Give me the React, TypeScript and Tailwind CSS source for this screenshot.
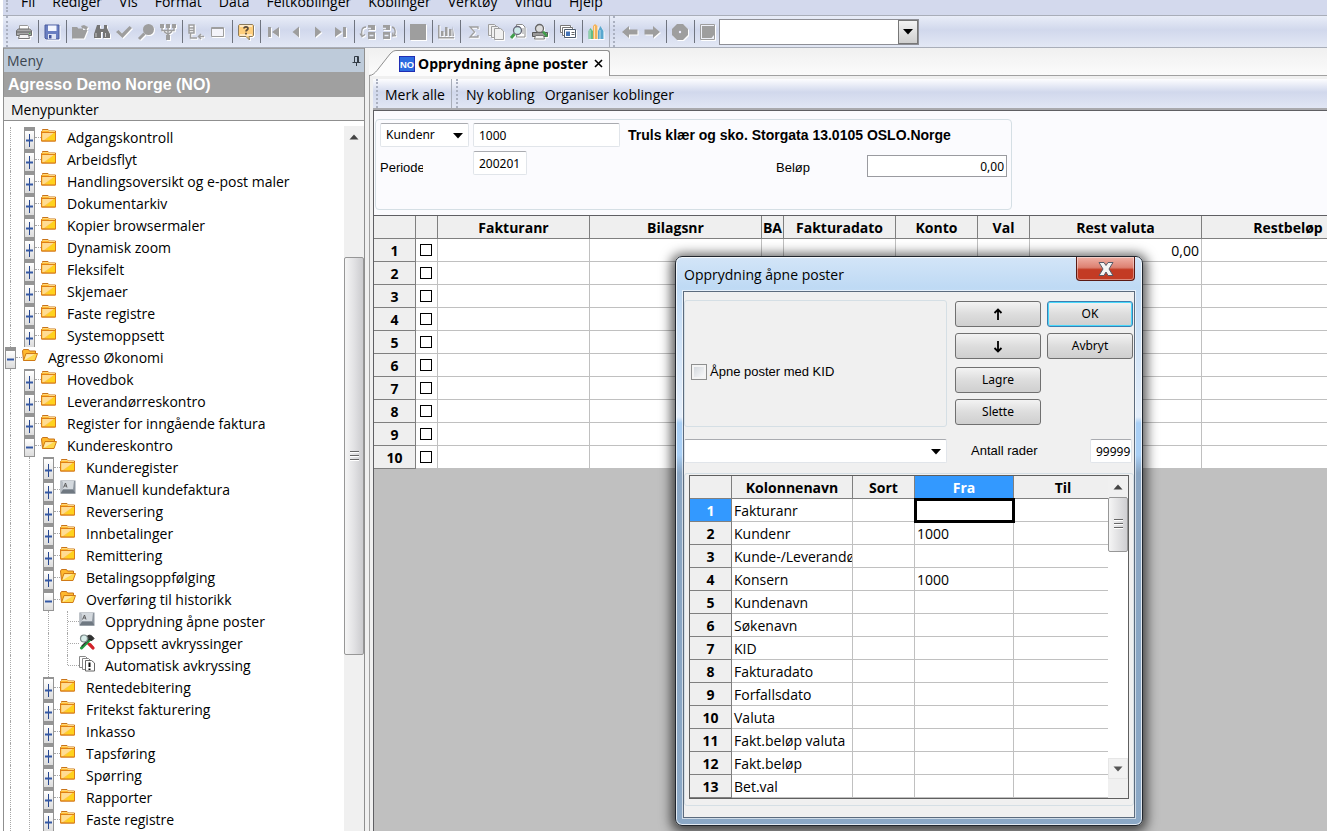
import React from 'react';

type IconKind = 'folder' | 'open' | 'form' | 'tools' | 'report';
type Row = { label: string; level: number; icon: IconKind; exp?: '+' | '-'; first?: boolean; last?: boolean };

const rows: Row[] = [
  { label: 'Adgangskontroll', level: 2, icon: 'folder', exp: '+' },
  { label: 'Arbeidsflyt', level: 2, icon: 'folder', exp: '+' },
  { label: 'Handlingsoversikt og e-post maler', level: 2, icon: 'folder', exp: '+' },
  { label: 'Dokumentarkiv', level: 2, icon: 'folder', exp: '+' },
  { label: 'Kopier browsermaler', level: 2, icon: 'folder', exp: '+' },
  { label: 'Dynamisk zoom', level: 2, icon: 'folder', exp: '+' },
  { label: 'Fleksifelt', level: 2, icon: 'folder', exp: '+' },
  { label: 'Skjemaer', level: 2, icon: 'folder', exp: '+' },
  { label: 'Faste registre', level: 2, icon: 'folder', exp: '+' },
  { label: 'Systemoppsett', level: 2, icon: 'folder', exp: '+' },
  { label: 'Agresso Økonomi', level: 1, icon: 'open', exp: '-', last: true },
  { label: 'Hovedbok', level: 2, icon: 'folder', exp: '+', first: true },
  { label: 'Leverandørreskontro', level: 2, icon: 'folder', exp: '+' },
  { label: 'Register for inngående faktura', level: 2, icon: 'folder', exp: '+' },
  { label: 'Kundereskontro', level: 2, icon: 'open', exp: '-', last: true },
  { label: 'Kunderegister', level: 3, icon: 'folder', exp: '+', first: true },
  { label: 'Manuell kundefaktura', level: 3, icon: 'form', exp: '+' },
  { label: 'Reversering', level: 3, icon: 'folder', exp: '+' },
  { label: 'Innbetalinger', level: 3, icon: 'folder', exp: '+' },
  { label: 'Remittering', level: 3, icon: 'folder', exp: '+' },
  { label: 'Betalingsoppfølging', level: 3, icon: 'open', exp: '+' },
  { label: 'Overføring til historikk', level: 3, icon: 'open', exp: '-', last: true },
  { label: 'Opprydning åpne poster', level: 4, icon: 'form' },
  { label: 'Oppsett avkryssinger', level: 4, icon: 'tools' },
  { label: 'Automatisk avkryssing', level: 4, icon: 'report', last: true },
  { label: 'Rentedebitering', level: 3, icon: 'folder', exp: '+', first: true },
  { label: 'Fritekst fakturering', level: 3, icon: 'folder', exp: '+' },
  { label: 'Inkasso', level: 3, icon: 'folder', exp: '+' },
  { label: 'Tapsføring', level: 3, icon: 'folder', exp: '+' },
  { label: 'Spørring', level: 3, icon: 'folder', exp: '+' },
  { label: 'Rapporter', level: 3, icon: 'folder', exp: '+' },
  { label: 'Faste registre', level: 3, icon: 'folder', exp: '+' },
];

function TreeIcon({ kind }: { kind: IconKind }) {
  return (
    <svg width="16" height="16" viewBox="0 0 16 16" className="mb-1 shrink-0" aria-hidden="true">
      {kind === 'folder' && (
        <g>
          <path d="M.5 13V3.500l1-1V1.500h5.500l1 1.500h6.500V13z" fill="#ffb92e" stroke="#c8741a" />
          <path d="M1.500 2.500h6l.5 1h6" stroke="#ffd77c" fill="none" />
          <path d="M1 4h13.500v8.500H1z" fill="#ffc93c" />
          <path d="M1.500 4.500h12L3 12H1.500z" fill="#ffdc94" />
          <path d="M14 4v8.500H5L13 5z" fill="#ffd21e" />
          <path d="M.5 4.500h14V13H.5z" fill="none" stroke="#dd7f18" />
        </g>
      )}
      {kind === 'open' && (
        <g strokeLinejoin="round">
          <path d="M1.500 12.500l-1-9.500 1-1.500h5l1 1.500h6v3" fill="#ffb92e" stroke="#c8741a" />
          <path d="M1.500 12.500l2.500-7h11.500l-2.500 7z" fill="#ffd84a" stroke="#d07a16" />
          <path d="M4.600 6.300h8L3.500 11.500h-.9z" fill="#ffe7ae" />
        </g>
      )}
      {kind === 'form' && (
        <g>
          <path d="M.5.500h15v13H.5z" fill="#8d959e" />
          <path d="M2 1h12l-1 8.500H3z" fill="#d4d9de" />
          <path d="M.5 13.500L3 9.500h10l2.500 4z" fill="#6f7881" />
          <path d="M.5.500L3 2v7.500L.5 13z" fill="#b7bdc4" />
          <path d="M3.500 7.500L5.500 3l1.500 4.500M4.300 6h2.200" stroke="#555" fill="none" strokeWidth=".9" />
        </g>
      )}
      {kind === 'tools' && (
        <g fill="none" strokeLinecap="round">
          <path d="M4 4.500L14 14" stroke="#d2232a" strokeWidth="2.600" />
          <path d="M11.500 5L2.500 14" stroke="#1f9d40" strokeWidth="3" />
          <path d="M9 6L3 12" stroke="#333" strokeWidth="1.200" />
          <circle cx="5" cy="4.500" r="3.500" fill="#d7ece9" stroke="#7b8a8a" strokeWidth="1.200" />
          <path d="M8.500 2c2-1.600 4-1 6.500 2.500L13 6.500 9.500 5" fill="#333" stroke="#222" />
          <path d="M11 10.500l3 3.500" stroke="#d2232a" strokeWidth="3" />
        </g>
      )}
      {kind === 'report' && (
        <g fill="#fff" stroke="#888">
          <path d="M.5.500h6l2 2v9h-8z" />
          <path d="M3.500 2.500h6l2 2v9h-8z" />
          <path d="M6.500 4.500h6l3 2.500v8h-9z" stroke="#666" />
          <path d="M10.500 6.500v4.500M10.500 12.500v1.500" stroke="#111" strokeWidth="2" />
        </g>
      )}
    </svg>
  );
}

function TreeRow({ row }: { row: Row }) {
  return (
    <li className="flex h-[22px] shrink-0 items-stretch">
      {Array.from({ length: row.level - 1 }, (_, i) => (
        <span key={i} className="flex w-[19px] shrink-0 pl-1.5">
          <span className="border-l border-dotted border-[#a8a8a8]" />
        </span>
      ))}
      {row.exp ? (
        <span className="flex w-[18px] shrink-0 pl-px">
          <button
            type="button"
            aria-label={(row.exp === '+' ? 'Utvid ' : 'Skjul ') + row.label}
            className={
              'flex w-[11px] items-center justify-center border-x border-[#949494] bg-linear-to-b from-white to-[#dcdcdc] ' +
              (row.first ? 'border-t-2 pt-0.5 ' : 'border-t-4 ') +
              (row.last ? 'border-b' : '')
            }
          >
            <svg width="7" height="13" viewBox="0 0 7 13" className="shrink-0" aria-hidden="true">
              {row.exp === '+' && <path d="M3.500 0v13" stroke="#26468f" />}
              <path d="M0 6.500h7" stroke="#3458a4" strokeWidth="2" />
            </svg>
          </button>
          <span className="mt-2.5 h-0 grow border-t border-dotted border-[#a8a8a8]" />
        </span>
      ) : (
        <span className="flex w-[18px] shrink-0 pl-1.5">
          <span className={'border-l border-dotted border-[#a8a8a8] ' + (row.last ? 'h-2.5' : '')} />
          <span className="mt-2.5 h-0 grow border-t border-dotted border-[#a8a8a8]" />
        </span>
      )}
      <span className="flex w-[26px] shrink-0 items-center">
        <TreeIcon kind={row.icon} />
      </span>
      <a href="#" className="whitespace-nowrap text-[14px] leading-[22px]">{row.label}</a>
    </li>
  );
}

const G = '#9e9e9e';

const tools: Record<string, React.ReactNode> = {
  Skriv: (
    <g>
      <path d="M4.500 7V2.500h8l1 1V7" fill="#fff" stroke="#999" />
      <path d="M1.500 7.500l2-1.500h11l2 1.500v5h-15z" fill="#a9a9a9" stroke="#6c6c6c" />
      <path d="M2 9h14" stroke="#5c5c5c" />
      <path d="M4.500 11.500h9l1 4h-11z" fill="#f3f3f3" stroke="#777" />
      <path d="M14 10.500h1.500" stroke="#4fae4f" />
    </g>
  ),
  Lagre: (
    <g>
      <path d="M2 2h14v14H3l-1-1z" fill="#6a7fc2" stroke="#4b5c9e" />
      <path d="M5 2.500h8.500v5.500H5z" fill="#f3f6ff" />
      <path d="M5 11h8v5H5z" fill="#dfe5f5" />
      <path d="M6 12h2.500v3.500H6z" fill="#42549a" />
    </g>
  ),
  Apne: <path d="M1 4h5l1.500 1.500H12V7h4.500L13 15.500H1zM10 3l3-1 4 2-2 4-1-2-3-1z" fill={G} />,
  Sok: (
    <g fill="#757575">
      <path d="M4 2h3v3l1 2v8H1v-4zM11 2h3v3l3 6v4h-7V7l1-2z" />
      <path d="M7 6h4v3H7z" />
      <path d="M3 10v4M12.500 10v4" stroke="#ccc" />
    </g>
  ),
  Bekreft: <path d="M1 9l2.500-2L7 10.500 14.500 3 17 5 7.500 15z" fill={G} />,
  Zoom: (
    <g>
      <circle cx="11.500" cy="6.500" r="5.500" fill={G} />
      <path d="M7.500 10.500L2 16" stroke={G} strokeWidth="3" />
    </g>
  ),
  Filter: (
    <g fill={G}>
      <path d="M1 1h4v4H1zM7 1h4v4H7zM13 1h4v4h-4zM7 12h4v5H7z" />
      <path d="M3 5v2.500h12V5M9 5v7M5 8.500l4 3 4-3" fill="none" stroke={G} strokeWidth="1.500" />
    </g>
  ),
  Struktur: (
    <g fill="none" stroke={G} strokeWidth="1.500">
      <path d="M2 2h5v8H2zM2 5h5M2 7.500h5M3.500 10v5H10M12 13.500h5M14 11l-2.500 2.500L14 16" />
    </g>
  ),
  Vindu: (
    <g>
      <path d="M2.500 4.500h12v9h-12z" fill="#f4f4fa" stroke={G} />
      <path d="M3 5.500h11" stroke={G} />
    </g>
  ),
  Hjelp: (
    <g>
      <path d="M2.500 1.500h13l1 1v10l-1 1H12l.5 3.500-3.500-3.500H2.500l-1-1v-10z" fill="#ffcf7d" stroke="#8a7a5c" />
      <path d="M3 3h12M3 12h12" stroke="#ffe9c4" strokeWidth="2" />
      <path d="M7 5.500c0-2.200 4-2.200 4 0 0 1.500-2 1.500-2 3M9 9.800v1.700" fill="none" stroke="#5a4a3a" strokeWidth="1.700" />
    </g>
  ),
  Forste: <path d="M3 4h3v10H3zM14 4v10L7 9z" fill={G} />,
  Forrige: <path d="M12 3.500v11L5.500 9z" fill={G} />,
  Neste: <path d="M6 3.500v11L12.500 9z" fill={G} />,
  Siste: <path d="M12 4h3v10h-3zM4 4v10l7-5z" fill={G} />,
  Inn: (
    <g fill={G}>
      <path d="M9 2h7v5H9zM9 9h7v7H9z" />
      <path d="M7 4c-4 0-5 3-4 9M1 10.500L3 13.500l3-2" fill="none" stroke={G} strokeWidth="1.300" />
      <path d="M10.500 12.500h4M9 5.500h3" stroke="#e8ecf7" strokeWidth="1.500" />
    </g>
  ),
  Ut: (
    <g fill={G}>
      <path d="M2 2h7v5H2zM2 9h7v7H2z" />
      <path d="M11 4c4 1 4 7 1 9M15 12.500l-3.500.5.5-3.500" fill="none" stroke={G} strokeWidth="1.300" />
      <path d="M3.500 12.500h4M2 5.500h3" stroke="#e8ecf7" strokeWidth="1.500" />
    </g>
  ),
  Stopp: <path d="M1 1h16v16H1z" fill={G} />,
  Graf: <path d="M1 2h1.500v12H17v1.500H1zM4 8h2.500v5H4zM8 4h2.500v9H8zM12 6h2.500v7H12zM15.500 3v10H17" fill={G} />,
  Sum: <path d="M13 6V4H5l4.500 5L5 14h8v-2" fill="none" stroke={G} strokeWidth="1.300" />,
  Kopier: (
    <g fill="#f1f1f1" stroke={G}>
      <path d="M1.500 1.500h6l2 2v9h-8z" />
      <path d="M4.500 3.500h6l2 2v9h-8z" />
      <path d="M7.500 5.500h6l3 2.500v8.500h-9z" />
    </g>
  ),
  Forhandsvis: (
    <g>
      <path d="M7.500 1.500h6l2.500 2.500v10H7.500z" fill="#fff" stroke="#8a8a8a" />
      <path d="M13 6h2M13 8h2M13 10h2" stroke="#999" />
      <path d="M5.500 11L2 15" stroke="#3f9d4b" strokeWidth="3" />
      <circle cx="8.500" cy="7.500" r="4" fill="#cfe9ea" stroke="#667" strokeWidth="1.300" />
    </g>
  ),
  Utskrift: (
    <g>
      <path d="M1.500 9.500h15v4h-15z" fill="#9a9a9a" stroke="#555" />
      <path d="M4.500 12.500h8l1 3.500h-10z" fill="#f3f3f3" stroke="#777" />
      <path d="M12 8.500l4 5" stroke="#3f9d4b" strokeWidth="2.500" />
      <circle cx="8.500" cy="5.500" r="4" fill="#dcdcdc" stroke="#666" strokeWidth="1.300" />
    </g>
  ),
  Kort: (
    <g fill="#fff" stroke="#777">
      <path d="M1.500 2.500h10v7h-10z" />
      <path d="M3.500 4.500h10v8h-10z" />
      <path d="M5.500 6.500h11v8h-11z" stroke="#4c5a6c" />
      <path d="M7 8.500h4v4.500H7z" fill="#4474b8" stroke="none" />
      <path d="M12.500 9.500h3M12.500 11.500h3" stroke="#666" />
    </g>
  ),
  Boker: (
    <g>
      <path d="M1.500 16V8l2-3 2.500 3v8z" fill="#63bd88" />
      <path d="M6 16V3l2-2 2.500 2v13z" fill="#f3b35a" />
      <path d="M11 16V8l2.500-5L16.500 8v8z" fill="#58a7cf" />
      <path d="M3 7v9M7.500 3v13M13 7v9" stroke="#fff" strokeOpacity=".6" />
    </g>
  ),
  Tilbake: <path d="M1 9l7-6v3.500h8.500v5H8V15z" fill={G} />,
  Frem: <path d="M17 9l-7-6v3.500H1.500v5H10V15z" fill={G} />,
  Avbryt: (
    <g>
      <path d="M6 1h6l5 5v6l-5 5H6l-5-5V6z" fill={G} />
      <circle cx="9" cy="9" r="1.200" fill="#eef" />
    </g>
  ),
  Side: (
    <g>
      <path d="M1.500 1.500h14v15h-14z" fill="#eef0f8" stroke={G} />
      <path d="M3 3h12v9l-2.500 3H3z" fill={G} />
    </g>
  ),
};

const groups = [
  ['Skriv'], ['Lagre'], ['Apne', 'Sok', 'Bekreft', 'Zoom', 'Filter'], ['Struktur', 'Vindu'], ['Hjelp'],
  ['Forste', 'Forrige', 'Neste', 'Siste'], ['Inn', 'Ut'], ['Stopp'], ['Graf'],
  ['Sum', 'Kopier', 'Forhandsvis', 'Utskrift'], ['Kort'], ['Boker'],
];
const navGroups = [['Tilbake', 'Frem'], ['Avbryt'], ['Side']];

function ToolGroups({ items }: { items: string[][] }) {
  return (
    <>
      {items.map((grp, i) => (
        <div key={i} className="flex items-center">
          {i > 0 && <span className="flex w-1.5 justify-center"><span className="h-[23px] w-px bg-[#6f747f]" /></span>}
          {grp.map((n) => (
            <button key={n} type="button" aria-label={n} className="flex h-[22px] w-[22px] items-center justify-center">
              <svg width="18" height="18" viewBox="0 0 18 18" className="drop-shadow-[1px_1px_0_#ffffff]" aria-hidden="true">{tools[n]}</svg>
            </button>
          ))}
        </div>
      ))}
    </>
  );
}

function Grip() {
  return <span className="w-0 shrink-0 self-stretch border-l-2 border-dotted border-[#aab0c0]" />;
}

function Arrow({ up }: { up?: boolean }) {
  return (
    <svg width="10" height="6" viewBox="0 0 10 6" aria-hidden="true">
      <path d={up ? 'M5 .5L9.500 5.500H.5z' : 'M0 0h10L5 5.500z'} fill={up ? '#444' : '#000'} />
    </svg>
  );
}

function Thumb() {
  return (
    <svg width="9" height="11" viewBox="0 0 9 11" aria-hidden="true">
      <path d="M0 .5h9M0 4.500h9M0 8.500h9" stroke="#666" />
      <path d="M0 1.500h9M0 5.500h9M0 9.500h9" stroke="#fff" />
    </svg>
  );
}

const menu = ['Fil', 'Rediger', 'Vis', 'Format', 'Data', 'Feltkoblinger', 'Koblinger', 'Verktøy', 'Vindu', 'Hjelp'];
const mainCols = ['Fakturanr', 'Bilagsnr', 'BA', 'Fakturadato', 'Konto', 'Val', 'Rest valuta', 'Restbeløp'];
const fields = ['Fakturanr', 'Kundenr', 'Kunde-/Leverandør', 'Konsern', 'Kundenavn', 'Søkenavn', 'KID', 'Fakturadato', 'Forfallsdato', 'Valuta', 'Fakt.beløp valuta', 'Fakt.beløp', 'Bet.val'];

const field = 'border border-[#e1e5ea] border-t-[#a9abb0] rounded-[2px] bg-white font-["Noto_Sans",sans-serif] text-[12px] leading-[16px] outline-none';
const headBox = 'border-r border-b border-[#7f7f7f] p-0 pt-0.5 font-bold whitespace-nowrap overflow-hidden';
const head = headBox + ' bg-[#efefef]';
const headActive = headBox + ' bg-[#3399ff] text-white';
const cell = 'border-r border-b border-[#c0c0c0] bg-white p-0 whitespace-nowrap overflow-hidden';

const btn = 'flex h-[26px] w-[86px] items-center justify-center rounded-[3px] border bg-linear-to-b from-[#f3f3f3] from-0% via-[#dddddd] via-50% to-[#cfcfcf] font-["Noto_Sans",sans-serif] text-[12px]';

function Dialog() {
  return (
    <section
      role="dialog"
      aria-labelledby="dlg-title"
      className="absolute top-[256px] left-[675px] flex w-[468px] flex-col rounded-[7px] border border-[#20262e] bg-[linear-gradient(180deg,#d3e5f8_0px,#bfdaf4_30px,#c9dff6_60px,#e4eefa_160px,#a9cff5_166px,#a9cff5_198px,#8aa5c2_216px,#8ba8c6_100%)] px-[7px] pb-[7px] shadow-[inset_0_0_0_1px_rgba(255,255,255,0.75),0_2px_12px_4px_rgba(0,0,0,0.65)]"
    >
      <header className="flex h-[34px] items-start justify-between">
        <h2 id="dlg-title" className="pt-2 pl-px text-[14px] leading-[20px]">Opprydning åpne poster</h2>
        <button
          type="button"
          aria-label="Lukk"
          className="flex h-6 w-[59px] items-center justify-center rounded-b-[4px] border border-t-0 border-[#5b1a14] bg-linear-to-b from-[#efb1a6] via-[#dd8172] via-45% to-[#c33b24] to-55% shadow-[inset_0_0_0_1px_rgba(255,255,255,0.4)]"
        >
          <svg width="16" height="14" viewBox="0 0 16 14" aria-hidden="true">
            <path d="M1 .500h5L8 3.500 10 .500h5L11 7l4 6.500h-5L8 10l-2 3.500H1L5 7z" fill="#f4f4f4" stroke="#565a68" />
          </svg>
        </button>
      </header>
      <div className="flex flex-col border border-[#5c6b7d] bg-[#f0f0f0] pb-[11px] shadow-[0_0_0_1px_rgba(255,255,255,0.6)]">
        <div className="flex items-start pt-2">
          <div className="flex h-[127px] w-[263px] items-center rounded-[3px] border border-[#d5dfe5] pt-4 pl-1.5">
            <input id="kid" type="checkbox" className="h-4 w-4 appearance-none border border-[#8e8f8f] bg-linear-to-br from-[#cdd2d8] to-white shadow-[inset_0_0_0_2px_#f4f4f4]" />
            <label htmlFor="kid" className="pl-[3px] font-['Liberation_Sans',sans-serif] text-[13px]">Åpne poster med KID</label>
          </div>
          <div className="flex flex-col gap-1.5 pt-px pl-2">
            <button type="button" aria-label="Opp" className={btn + ' border-[#707070]'}>
              <svg width="10" height="13" viewBox="0 0 10 13" aria-hidden="true"><path d="M5 12V2M1.500 5L5 1.500 8.500 5" fill="none" stroke="#000" strokeWidth="1.800" /></svg>
            </button>
            <button type="button" aria-label="Ned" className={btn + ' border-[#707070]'}>
              <svg width="10" height="13" viewBox="0 0 10 13" aria-hidden="true"><path d="M5 1v10M1.500 8L5 11.500 8.500 8" fill="none" stroke="#000" strokeWidth="1.800" /></svg>
            </button>
            <button type="button" className={btn + ' mt-0.5 border-[#707070]'}>Lagre</button>
            <button type="button" className={btn + ' border-[#707070]'}>Slette</button>
          </div>
          <div className="flex flex-col gap-1.5 pt-px pl-1.5">
            <button type="button" className={btn + ' border-[#3c7fb1] shadow-[inset_0_0_0_1px_#48d8fb]'}>OK</button>
            <button type="button" className={btn + ' border-[#707070]'}>Avbryt</button>
          </div>
        </div>
        <div className="flex items-center pt-3 pr-0.5">
          <div className="relative w-[263px]">
            <select aria-label="Oppsett" className={field + ' h-6 w-full appearance-none'}><option></option></select>
            <span className="pointer-events-none absolute top-2.5 right-1.5"><Arrow /></span>
          </div>
          <label htmlFor="rader" className="grow pl-6 font-['Liberation_Sans',sans-serif] text-[13px]">Antall rader</label>
          <input id="rader" defaultValue="99999" className={field + ' h-6 w-[42px] pl-[5px]'} />
        </div>
        <div className="mt-2.5 rounded-[3px] border border-[#d5dfe5] px-1 pt-px pb-1.5">
          <div className="flex h-[324px] w-full overflow-hidden border border-[#5f5f5f] bg-white">
            <table className="w-[418px] shrink-0 table-fixed border-separate border-spacing-0 text-[14px] leading-[20px]">
              <colgroup>
                <col className="w-[42px]" /><col className="w-[121px]" /><col className="w-[62px]" /><col className="w-[99px]" /><col />
              </colgroup>
              <thead>
                <tr className="h-[23px]">
                  <td className={head} />
                  <th className={head}>Kolonnenavn</th>
                  <th className={head}>Sort</th>
                  <th className={headActive}>Fra</th>
                  <th className="border-b border-[#7f7f7f] bg-[#efefef] p-0 pt-0.5 pl-1">Til</th>
                </tr>
              </thead>
              <tbody>
                {fields.map((f, i) => (
                  <tr key={f} className="h-[23px]">
                    <th className={i === 0 ? headActive : head}>{i + 1}</th>
                    <td className={cell + ' pt-0.5 pl-0.5 text-clip'}>{f}</td>
                    <td className={cell} />
                    <td className={cell + ' pt-0.5 pl-0.5 ' + (i === 0 ? 'outline-3 -outline-offset-2 outline-black' : '')}>{i === 1 || i === 3 ? '1000' : ''}</td>
                    <td className="border-b border-[#c0c0c0] p-0" />
                  </tr>
                ))}
              </tbody>
            </table>
            <div className="flex grow flex-col items-stretch">
              <button type="button" aria-label="Rull opp" className="flex h-[21px] items-center justify-center bg-[#f0f0f0]"><Arrow up /></button>
              <div className="flex h-[55px] items-center justify-center rounded-[2px] border border-[#979797] bg-linear-to-r from-[#f5f5f5] to-[#cfcfd2]"><Thumb /></div>
              <div className="grow" />
              <button type="button" aria-label="Rull ned" className="flex h-[21px] items-center justify-center border border-[#e6e6e6] bg-[#f2f2f2]">
                <svg width="10" height="6" viewBox="0 0 10 6" aria-hidden="true"><path d="M.5.500h9L5 5.500z" fill="#555" /></svg>
              </button>
              <div className="h-[19px] bg-[#f0f0f0]" />
            </div>
          </div>
        </div>
      </div>
    </section>
  );
}

export default function App() {
  return (
    <div className="relative flex h-screen w-full flex-col overflow-hidden bg-white pl-[3px] font-['Open_Sans','Noto_Sans',sans-serif] text-[14px] text-black">
      <nav className="flex h-4 shrink-0 items-end border-b border-[#a9aeb9] bg-[#d3d9ed] pb-[3px] pl-[3px]">
        <div className="flex h-3"><Grip /></div>
        <div className="flex gap-[17px] pl-[13px]">
          {menu.map((m) => (
            <a key={m} href="#" className="h-5 leading-[20px]">{m}</a>
          ))}
        </div>
      </nav>
      <div className="flex h-8 shrink-0 items-center border-b border-[#a9aeb9] bg-linear-to-b from-[#e9edf8] via-[#d1d8ec] via-45% to-[#e3e8f5] pl-[3px]">
        <Grip />
        <div className="flex pl-[5px]"><ToolGroups items={groups} /></div>
        <span className="ml-0.5 w-px self-stretch bg-[#a9aeb9]" />
        <span className="flex self-stretch pl-[3px]"><Grip /></span>
        <div className="flex pl-1"><ToolGroups items={navGroups} /></div>
        <div className="flex h-[26px] w-[200px] border border-[#8e8f96] bg-white">
          <input aria-label="Kommando" className="w-0 grow outline-none" />
          <button type="button" aria-label="Vis liste" className="flex w-5 items-center justify-center border border-[#777] bg-linear-to-b from-[#f3f3f3] to-[#cfcfcf]"><Arrow /></button>
        </div>
      </div>

      <div className="flex min-h-0 grow bg-[#f0f0f0]">
        <aside className="flex w-[362px] shrink-0 flex-col border-x border-[#8f8f8f] bg-white">
          <header className="flex h-6 shrink-0 items-center justify-between border-t border-[#a0a0a0] bg-[#becbda] pr-[3px] pl-[3px] text-[#3c4650]">
            <h2>Meny</h2>
            <button type="button" aria-label="Fest">
              <svg width="9" height="10" viewBox="0 0 9 10" aria-hidden="true"><path d="M2.500 6V.5h4V6M5.500 1v5M.5 6.500h8M4.500 7v3" fill="none" stroke="#333c46" /></svg>
            </button>
          </header>
          <h1 className="h-[25px] shrink-0 bg-[#a0a0a0] pl-1 font-['Liberation_Sans',sans-serif] text-[16px] leading-[25px] font-bold text-white">Agresso Demo Norge (NO)</h1>
          <h3 className="h-6 shrink-0 border-b border-[#8f8f8f] bg-[#f0f0f0] pl-[7px] leading-[26px]">Menypunkter</h3>
          <div className="flex min-h-0 grow overflow-hidden pt-[5px]">
            <ul className="flex min-w-0 grow flex-col pt-px">
              {rows.map((r, i) => <TreeRow key={i} row={r} />)}
            </ul>
            <div className="flex w-5 flex-col bg-[#f0f0f0]">
              <button type="button" aria-label="Rull opp" className="flex h-[21px] items-center justify-center"><Arrow up /></button>
              <div className="mt-[110px] flex h-[398px] items-center justify-center rounded-[2px] border border-[#979797] bg-linear-to-r from-[#f5f5f5] via-[#e2e2e4] to-[#cbcbce]"><Thumb /></div>
            </div>
          </div>
        </aside>

        <main className="ml-1 flex min-w-0 grow flex-col">
          <div className="flex h-7 shrink-0 items-end border-b border-[#a0a0a0] bg-linear-to-b from-[#f0f0f0] to-[#fbfbfb]">
            <div className="-mb-px flex h-[26px]">
              <svg width="28" height="26" viewBox="0 0 28 26" aria-hidden="true">
                <path d="M0 25.500c4 0 6-3 8-5L21 4c3-3 4-3.500 7-3.500V26H0z" fill="#fcfcfc" />
                <path d="M0 25.500c4 0 6-3 8-5L21 4c3-3 4-3.500 7-3.500" fill="none" stroke="#8f8f8f" />
              </svg>
              <div className="flex items-center rounded-tr-[3px] border-t border-r border-[#8f8f8f] bg-[#fcfcfc] pr-1.5 pl-0.5">
                <svg width="16" height="16" viewBox="0 0 17 17" aria-hidden="true">
                  <rect x=".5" y=".5" width="16" height="16" fill="#2c6be0" stroke="#1a27b0" />
                  <text x="8.500" y="12.500" textAnchor="middle" fontSize="10" fontWeight="bold" fontFamily="Liberation Sans" fill="#fff">NO</text>
                </svg>
                <span className="pl-[3px] font-bold whitespace-nowrap">Opprydning åpne poster</span>
                <button type="button" aria-label="Lukk fane" className="pl-1.5">
                  <svg width="9" height="9" viewBox="0 0 9 9" aria-hidden="true"><path d="M1 1l7 7M8 1L1 8" stroke="#000" strokeWidth="1.600" /></svg>
                </button>
              </div>
            </div>
          </div>
          <div className="flex min-h-0 grow flex-col border-l border-[#a0a0a0] pt-[3px] pl-[3px]">
            <div className="flex h-[31px] shrink-0 items-center border-b-2 border-[#a9a9ad] bg-linear-to-b from-[#fdfdff] via-[#d1d8ec] via-45% to-[#e1e6f4] pl-[3px]">
              <Grip />
              <button type="button" className="pt-px pl-[7px]">Merk alle</button>
              <span className="ml-1.5 w-px self-stretch bg-[#a9aeb9]" />
              <span className="flex self-stretch pl-1"><Grip /></span>
              <button type="button" className="pt-px pl-2">Ny kobling</button>
              <button type="button" className="pt-px pl-2.5">Organiser koblinger</button>
            </div>
            <div className="flex min-h-0 grow flex-col overflow-hidden border-t border-l border-[#5f5f63] bg-[#c0c0c0]">
              <div className="h-[104px] shrink-0 bg-[#fbfbfe] pt-2 pl-px">
                <div className="grid h-[91px] w-[637px] grid-cols-[93px_303px_91px_140px] content-start gap-y-1 rounded-[4px] border border-[#d5dfe5] pt-[3px] pl-1 font-['Liberation_Sans',sans-serif] text-[13px]">
                  <div className="relative w-[89px]">
                    <select aria-label="Søk etter" className={field + ' h-6 w-full appearance-none pl-[5px]'}><option>Kundenr</option></select>
                    <span className="pointer-events-none absolute top-2.5 right-1.5"><Arrow /></span>
                  </div>
                  <div className="col-span-3 flex items-center gap-2">
                    <input aria-label="Kundenr" defaultValue="1000" className={field + ' h-6 w-[147px] pl-[5px]'} />
                    <strong className="text-[14px] whitespace-nowrap">Truls klær og sko. Storgata 13.0105 OSLO.Norge</strong>
                  </div>
                  <label htmlFor="periode" className="w-[43px] self-end overflow-hidden">Periode</label>
                  <input id="periode" defaultValue="200201" className={field + ' h-6 w-[54px] pl-[5px]'} />
                  <label htmlFor="belop" className="self-end">Beløp</label>
                  <input id="belop" defaultValue="0,00" className="mt-1 h-[22px] border border-[#9a9ba0] bg-white pr-0.5 text-right font-['Noto_Sans',sans-serif] text-[12px]" />
                </div>
              </div>
              <table className="w-[1001px] shrink-0 table-fixed border-separate border-spacing-0 border-t border-[#5f5f63] leading-[20px]">
                <colgroup>
                  <col className="w-[42px]" /><col className="w-[22px]" /><col className="w-[152px]" /><col className="w-[172px]" /><col className="w-[22px]" />
                  <col className="w-[112px]" /><col className="w-[82px]" /><col className="w-[52px]" /><col className="w-[172px]" /><col />
                </colgroup>
                <thead>
                  <tr className="h-[23px]">
                    <td className={head} />
                    <td className={head} />
                    {mainCols.map((c) => <th key={c} className={head}>{c}</th>)}
                  </tr>
                </thead>
                <tbody>
                  {Array.from({ length: 10 }, (_, i) => (
                    <tr key={i} className="h-[23px]">
                      <th className={head}>{i + 1}</th>
                      <td className={cell}>
                        <input type="checkbox" aria-label={'Velg rad ' + (i + 1)} className="ml-1 block h-3 w-3 appearance-none border border-black bg-white" />
                      </td>
                      {mainCols.map((c) => (
                        <td key={c} className={cell + ' pt-0.5 pr-0.5 text-right'}>{i === 0 && c === 'Rest valuta' ? '0,00' : ''}</td>
                      ))}
                    </tr>
                  ))}
                </tbody>
              </table>
            </div>
          </div>
        </main>
      </div>
      <Dialog />
    </div>
  );
}
